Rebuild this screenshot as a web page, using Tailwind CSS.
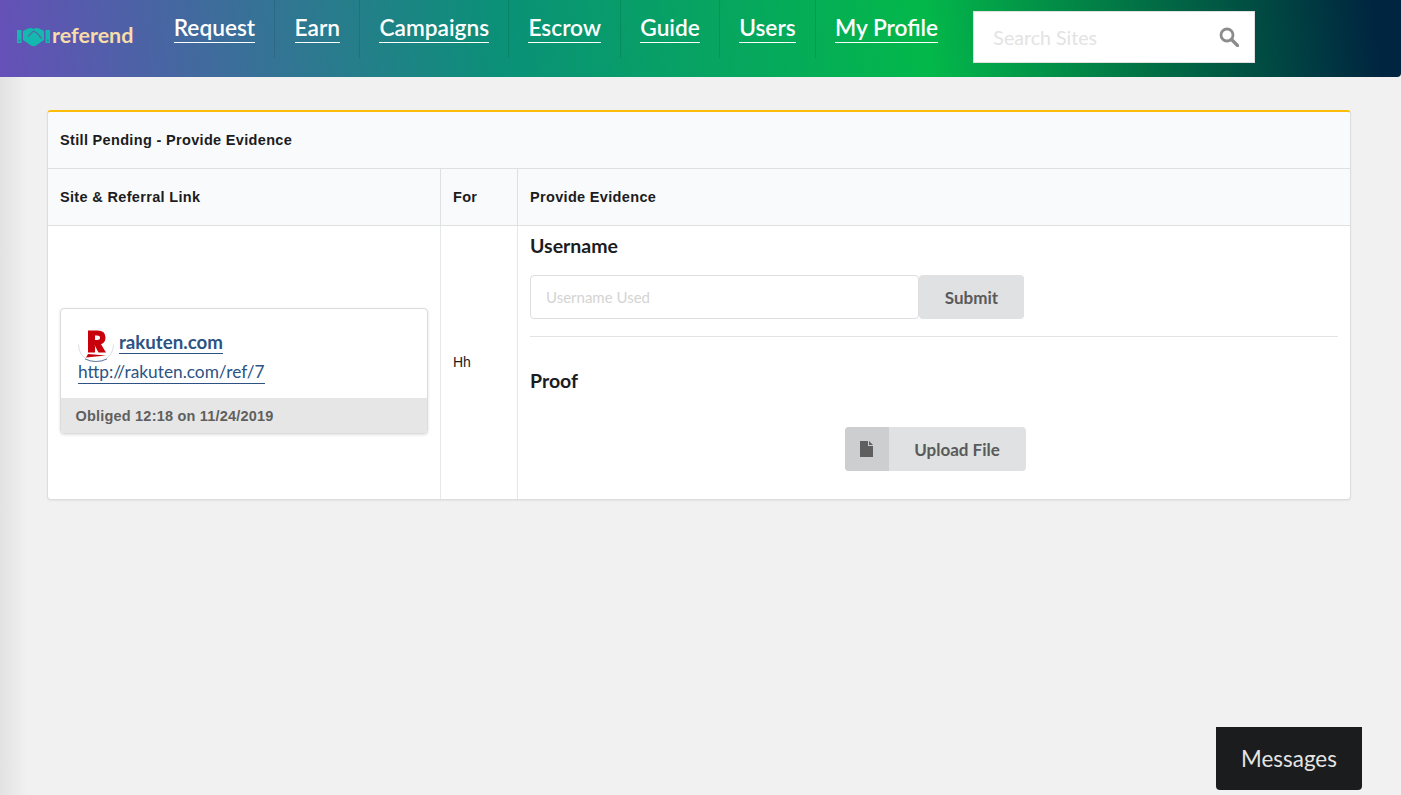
<!DOCTYPE html>
<html lang="en">
  <head>
    <meta charset="UTF-8" />
    <meta name="viewport" content="width=device-width, initial-scale=1.0" />
    <title>Referend</title>
    <script src="https://cdn.jsdelivr.net/npm/@tailwindcss/browser@4"></script>
  </head>

  <body class="h-[795px] overflow-hidden bg-[#f1f1f1] font-['Lato',sans-serif] text-[#1b1c1d]">
    <header
      class="flex h-[77px] items-start rounded-br-[4px] bg-[linear-gradient(83deg,#6650b8_0%,#0a9177_36%,#03b84a_66%,#002540_98%,#002540_100%)]"
    >
      <a href="#" class="flex h-[71px] w-[154.5px] items-center pl-[17px]">
        <svg viewBox="0 0 33 20" class="mt-[3px] h-[20px] w-[33px] shrink-0">
          <path fill="#14b8ae" d="M0 3h4.500v13H0zM28.500 3H33v13h-4.500z" />
          <path fill="#14b8ae" d="M6 4l5-2.500q3-1 5.500 .5q2.500-1.500 5.500-.5l5 2.500v9l-8 5.500q-2.500 1.500-5 0L6 13z" />
          <path fill="none" stroke="#4f6fa6" stroke-width="1.3" d="M11 9.500l5.500-5.500 4 2.500 4 5" />
          <circle cx="2.200" cy="13.500" r=".9" fill="#4f6fa6" />
          <circle cx="30.800" cy="13.500" r=".9" fill="#4f6fa6" />
        </svg>
        <span class="ml-[2px] text-[21.5px] leading-none font-bold text-[#f8dcaa]">referend</span>
      </a>
      <nav class="flex h-[58px] text-[22.7px] leading-none font-semibold text-white">
        <a href="#" class="flex items-center border-r border-black/10 px-[19.2px] pt-[2px]"><span class="border-b border-white pb-[2px]">Request</span></a>
        <a href="#" class="flex items-center border-r border-black/10 px-[19.2px] pt-[2px]"><span class="border-b border-white pb-[2px]">Earn</span></a>
        <a href="#" class="flex items-center border-r border-black/10 px-[19.2px] pt-[2px]"><span class="border-b border-white pb-[2px]">Campaigns</span></a>
        <a href="#" class="flex items-center border-r border-black/10 px-[19.2px] pt-[2px]"><span class="border-b border-white pb-[2px]">Escrow</span></a>
        <a href="#" class="flex items-center border-r border-black/10 px-[19.2px] pt-[2px]"><span class="border-b border-white pb-[2px]">Guide</span></a>
        <a href="#" class="flex items-center border-r border-black/10 px-[19.2px] pt-[2px]"><span class="border-b border-white pb-[2px]">Users</span></a>
        <a href="#" class="flex items-center px-[19.2px] pt-[2px]"><span class="border-b border-white pb-[2px]">My Profile</span></a>
      </nav>
      <div class="mt-[11px] ml-[16px] flex h-[52px] w-[282px] items-center border border-[#e0e0e0] bg-white pr-[15px] pl-[19px]">
        <input
          type="text"
          placeholder="Search Sites"
          class="min-w-0 flex-1 pt-[2px] text-[19.6px] outline-none placeholder:text-[#e3e3e3]"
        />
        <svg viewBox="0 0 20 20" class="h-[20px] w-[20px]">
          <circle cx="8" cy="8" r="6" fill="none" stroke="#8c8c8c" stroke-width="2.8" />
          <path d="M12.500 12.500l6 6" stroke="#8c8c8c" stroke-width="3.400" stroke-linecap="round" />
        </svg>
      </div>
    </header>

    <main class="h-[718px] bg-[linear-gradient(90deg,#e2e2e2_0,#f1f1f1_28px)] pt-[33px] pl-[47px]">
      <table class="w-[1304px] table-fixed border-separate border-spacing-0 overflow-hidden rounded-[4px] border border-t-2 border-[#dcdddd] border-t-[#fbbd08] bg-white font-['Liberation_Sans',sans-serif] text-[14px] shadow-[0_1px_2px_rgba(0,0,0,.06)]">
        <colgroup>
          <col class="w-[392px]" />
          <col class="w-[77px]" />
          <col />
        </colgroup>
        <thead class="bg-[#f9fafb] text-left text-[14.5px] font-bold tracking-[.33px]">
          <tr>
            <th colspan="3" class="h-[57px] border-b border-[#dfe0e1] px-3 pt-[2px]">Still Pending - Provide Evidence</th>
          </tr>
          <tr>
            <th class="h-[57px] border-b border-[#dfe0e1] px-3 pt-[2px]">Site &amp; Referral Link</th>
            <th class="border-b border-l border-[#dfe0e1] px-3 pt-[2px]">For</th>
            <th class="border-b border-l border-[#dfe0e1] px-3 pt-[2px]">Provide Evidence</th>
          </tr>
        </thead>
        <tbody>
          <tr>
            <td class="h-[273px] px-3 align-middle">
              <div class="mt-[16px] overflow-hidden rounded-[4px] border border-[#dcdcdc] bg-white font-['Lato',sans-serif] shadow-[0_1px_3px_rgba(0,0,0,.12)]">
                <div class="h-[89px] px-[17px] pt-[16px]">
                  <div class="flex h-[37px] items-center">
                    <svg viewBox="0 0 36 36" class="mt-[2px] h-[36px] w-[36px]">
                      <path d="M.5 18.500a17.500 17.500 0 0 0 35 0" fill="none" stroke="#cfd6de" stroke-width=".8" />
                      <path fill-rule="evenodd" fill="#c8000b" d="M10 4.500h9.500q8 0 8 7 0 5-4.500 6.800l5 8.200h-7.500l-4-7.500H17v7.500h-7zM17 9.500v4.500h2q3 0 3-2.250T19 9.500z" />
                      <path d="M8 31.500l2-3.500 18 1.500z" fill="#c8000b" />
                      <path d="M7 33q11 5 22 0" fill="none" stroke="#40618c" stroke-width=".8" />
                    </svg>
                    <a href="#" class="ml-[5px] border-b border-[#2c5384] text-[18.7px] leading-[21px] font-bold text-[#2c5384]">rakuten.com</a>
                  </div>
                  <a href="#" class="-mt-[3px] inline-block border-b border-[#2c5384] text-[17.3px] leading-[23px] text-[#2c5384]">http://rakuten.com/ref/7</a>
                </div>
                <div class="flex h-[35px] items-center bg-[#e6e6e6] pt-[3px] pl-[14.5px] font-['Liberation_Sans',sans-serif] text-[14.5px] font-bold tracking-[.2px] text-[#5f5f5f]">Obliged 12:18 on 11/24/2019</div>
              </div>
            </td>
            <td class="border-l border-[#e6e7e7] px-3 align-middle">Hh</td>
            <td class="border-l border-[#e6e7e7] px-3 align-top font-['Lato',sans-serif]">
              <h4 class="mt-[8px] text-[19.5px] leading-[23px] font-bold">Username</h4>
              <div class="mt-[18px] flex">
                <input
                  type="text"
                  placeholder="Username Used"
                  class="h-[44px] w-[389px] rounded-[4px] border border-[#dededf] px-[15px] text-[15px] outline-none placeholder:text-[#d4d4d4]"
                />
                <button class="h-[44px] w-[105px] rounded-[4px] bg-[#e0e1e2] pt-[1px] text-[17px] font-bold text-[#5a5a5a]">Submit</button>
              </div>
              <div class="mt-[17px] border-t border-[#e3e3e4]"></div>
              <h4 class="mt-[32px] text-[19.5px] leading-[23px] font-bold">Proof</h4>
              <div class="mt-[35px] flex justify-center pl-[2px]">
                <button class="flex h-[44px] w-[181px] items-center overflow-hidden rounded-[4px] bg-[#e0e1e2] text-[17px] font-bold text-[#5a5a5a]">
                  <span class="flex h-full w-[44px] items-center justify-center bg-[#cdcecf]">
                    <svg viewBox="0 0 13 16" class="h-[16px] w-[13px]">
                      <path fill="#5f5f5f" d="M0 0h8v5h5v11H0zM9 0l4 4H9z" />
                    </svg>
                  </span>
                  <span class="flex-1 pt-[2px] text-center">Upload File</span>
                </button>
              </div>
            </td>
          </tr>
        </tbody>
      </table>
    </main>

    <button class="fixed top-[727px] left-[1216px] h-[63px] w-[146px] rounded-b-[4px] bg-[#1b1c1d] pt-[1px] text-[22.4px] text-[#e4e4e4]">Messages</button>
  </body>
</html>
